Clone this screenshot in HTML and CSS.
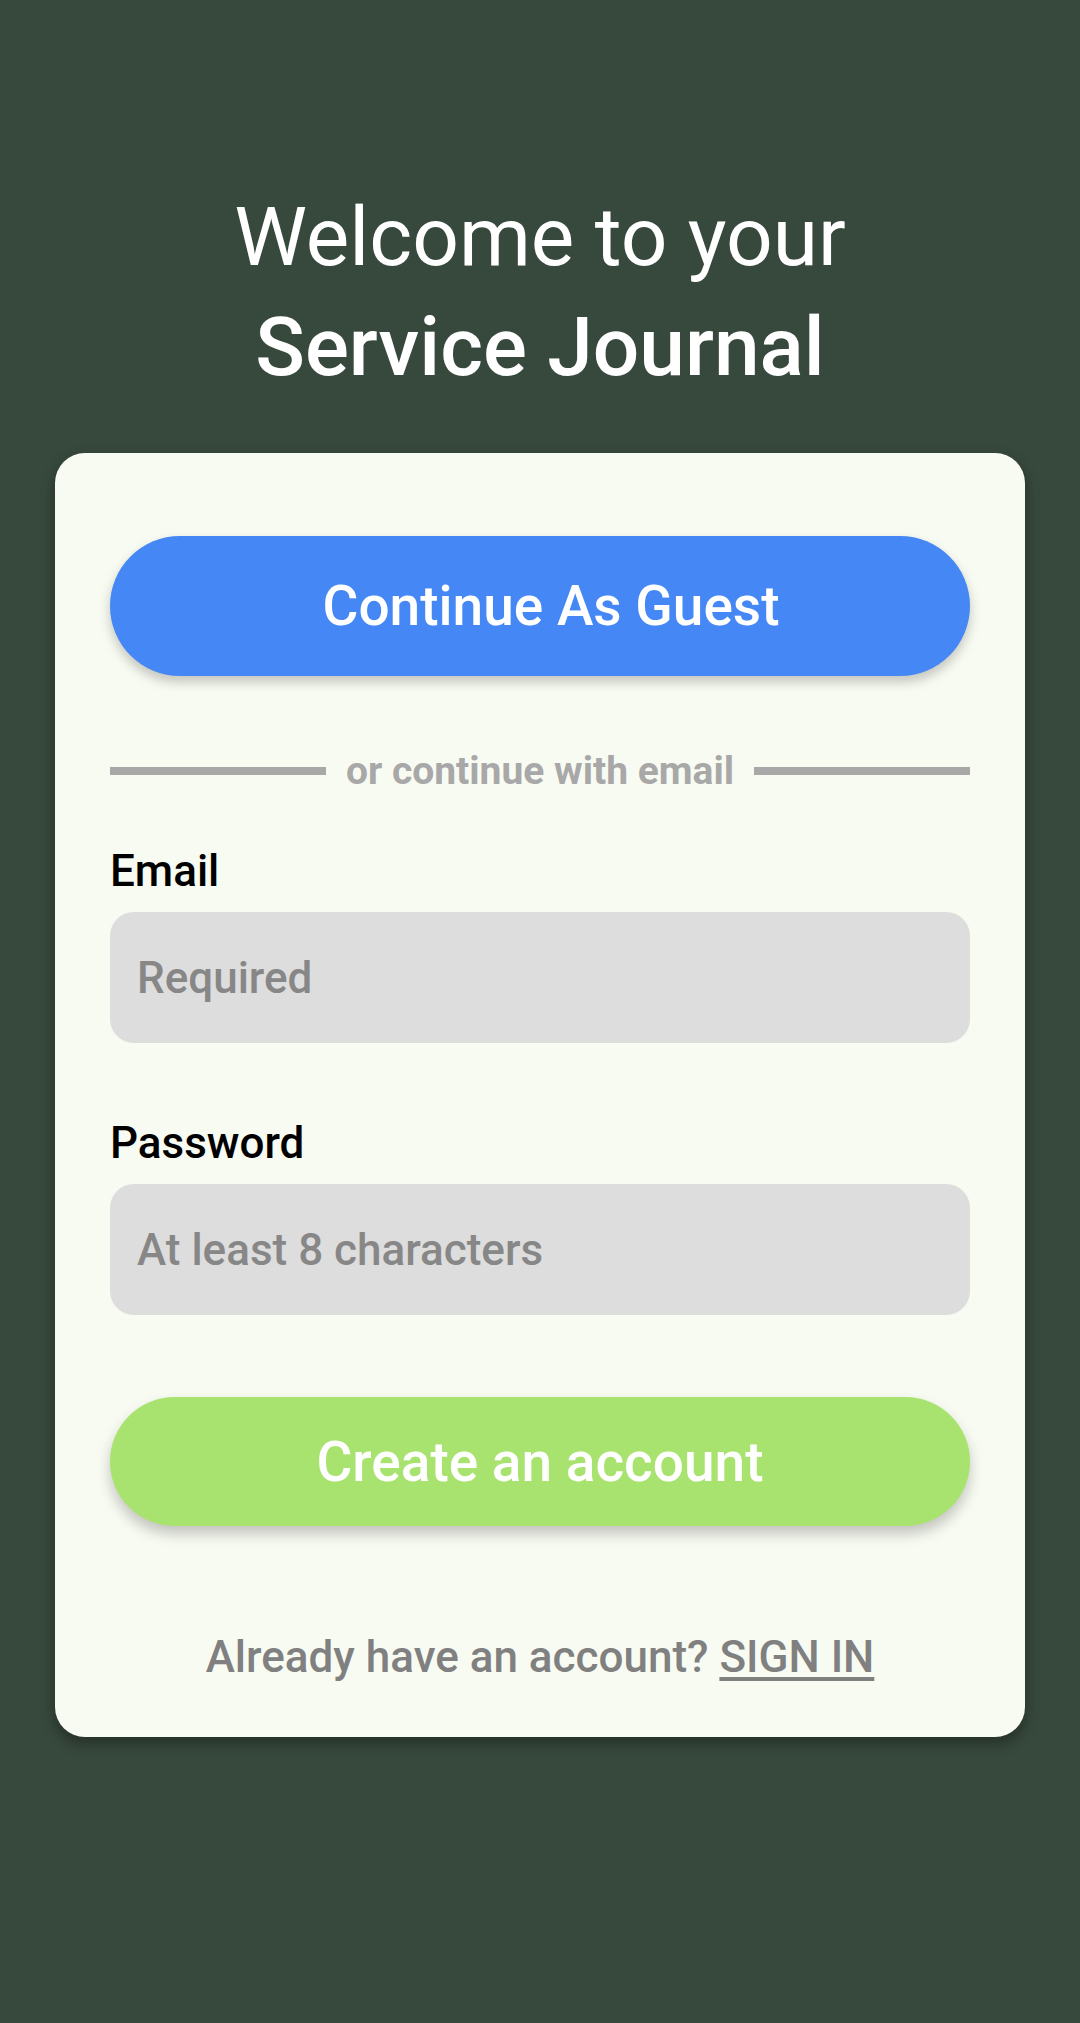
FILE: index.html
```html
<!DOCTYPE html>
<html lang="en">
<head>
<meta charset="utf-8">
<title>Service Journal</title>
<link rel="stylesheet" href="styles.css">
</head>
<body>
<main class="screen">
  <h1 class="title">
    <span class="title-line">Welcome to your</span>
    <span class="title-line title-strong">Service Journal</span>
  </h1>
  <section class="card">
    <button class="btn btn-guest" type="button">Continue As Guest</button>
    <div class="divider">
      <span class="divider-line"></span>
      <span class="divider-text">or continue with email</span>
      <span class="divider-line"></span>
    </div>
    <label class="field-label" for="email">Email</label>
    <div class="field"><input id="email" class="field-input" type="email" placeholder="Required"></div>
    <label class="field-label field-label-2" for="password">Password</label>
    <div class="field"><input id="password" class="field-input" type="password" placeholder="At least 8 characters"></div>
    <button class="btn btn-create" type="button">Create an account</button>
    <p class="signin">Already have an account? <a class="signin-link" href="#">SIGN IN</a></p>
  </section>
</main>
</body>
</html>
```
FILE: styles.css
```css
* { box-sizing: border-box; }
html, body {
  margin: 0;
  padding: 0;
}
body {
  width: 1080px;
  height: 2023px;
  background: #37483c;
  font-family: Roboto, "Noto Sans", "Liberation Sans", sans-serif;
  overflow: hidden;
}
.screen {
  display: flex;
  flex-direction: column;
  align-items: center;
  padding-top: 182px;
}
.title {
  margin: 0;
  display: flex;
  flex-direction: column;
  align-items: center;
  color: #ffffff;
  font-size: 82px;
  font-weight: 400;
  line-height: 110px;
}
.title-strong {
  font-weight: 500;
}
.card {
  margin-top: 51px;
  width: 970px;
  background: #f8fbf2;
  border-radius: 30px;
  padding: 83px 55px 55px;
  display: flex;
  flex-direction: column;
  box-shadow: 0 6px 14px rgba(0, 0, 0, 0.35);
}
.btn {
  border: none;
  border-radius: 70px;
  color: #ffffff;
  font-family: Roboto, "Noto Sans", "Liberation Sans", sans-serif;
  font-size: 55px;
  font-weight: 500;
  width: 100%;
  cursor: pointer;
}
.btn-guest {
  height: 140px;
  background: #4487f5;
  padding-left: 28px;
  box-shadow: 0 6px 12px rgba(0, 0, 0, 0.22);
}
.divider {
  margin-top: 73px;
  height: 44px;
  display: flex;
  align-items: center;
  gap: 20px;
}
.divider-line {
  flex: 1;
  height: 8px;
  background: #a8a8a8;
}
.divider-text {
  color: #a8a8a8;
  font-size: 39px;
  font-weight: 700;
  line-height: 44px;
}
.field-label {
  margin-top: 52px;
  color: #000000;
  font-size: 44px;
  font-weight: 500;
  line-height: 52px;
}
.field-label-2 {
  margin-top: 74px;
}
.field {
  margin-top: 15px;
  height: 131px;
  background: #dddddd;
  border-radius: 24px;
  display: flex;
  align-items: center;
  padding: 0 27px;
}
.field-input {
  width: 100%;
  border: none;
  outline: none;
  background: transparent;
  font-family: Roboto, "Noto Sans", "Liberation Sans", sans-serif;
  font-size: 44px;
  font-weight: 500;
  color: #333;
  padding: 0;
}
.field-input::placeholder {
  color: #878787;
  opacity: 1;
}
.btn-create {
  margin-top: 82px;
  height: 129px;
  background: #a9e36f;
  box-shadow: 0 8px 14px rgba(0, 0, 0, 0.22);
}
.signin {
  margin: 106px 0 0;
  text-align: center;
  color: #808080;
  font-size: 44px;
  font-weight: 500;
  line-height: 50px;
}
.signin-link {
  color: #808080;
  text-decoration: underline;
  text-underline-offset: 5px;
}
```
